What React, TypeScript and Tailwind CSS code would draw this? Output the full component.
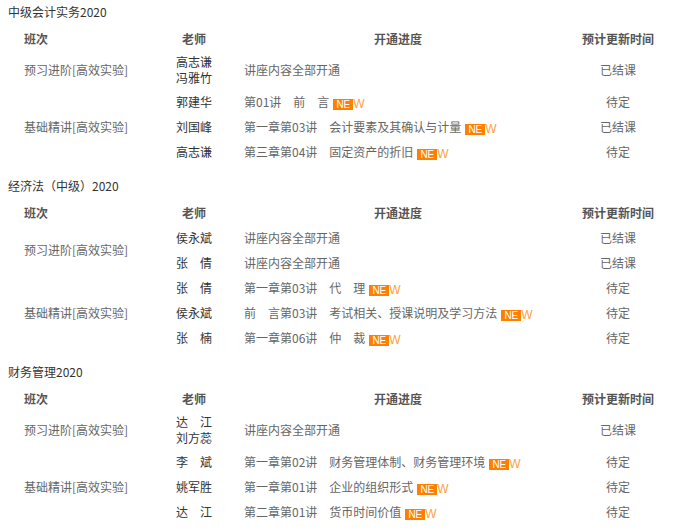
type Row = { teachers: string[]; progress: string; isNew?: boolean; status: string };
type Group = { name: string; rows: Row[] };
type Section = { title: string; groups: Group[] };

const sections: Section[] = [
  {
    title: "中级会计实务2020",
    groups: [
      {
        name: "预习进阶[高效实验]",
        rows: [{ teachers: ["高志谦", "冯雅竹"], progress: "讲座内容全部开通", status: "已结课" }],
      },
      {
        name: "基础精讲[高效实验]",
        rows: [
          { teachers: ["郭建华"], progress: "第01讲　前　言", isNew: true, status: "待定" },
          { teachers: ["刘国峰"], progress: "第一章第03讲　会计要素及其确认与计量", isNew: true, status: "已结课" },
          { teachers: ["高志谦"], progress: "第三章第04讲　固定资产的折旧", isNew: true, status: "待定" },
        ],
      },
    ],
  },
  {
    title: "经济法（中级）2020",
    groups: [
      {
        name: "预习进阶[高效实验]",
        rows: [
          { teachers: ["侯永斌"], progress: "讲座内容全部开通", status: "已结课" },
          { teachers: ["张　倩"], progress: "讲座内容全部开通", status: "已结课" },
        ],
      },
      {
        name: "基础精讲[高效实验]",
        rows: [
          { teachers: ["张　倩"], progress: "第一章第03讲　代　理", isNew: true, status: "待定" },
          { teachers: ["侯永斌"], progress: "前　言第03讲　考试相关、授课说明及学习方法", isNew: true, status: "待定" },
          { teachers: ["张　楠"], progress: "第一章第06讲　仲　裁", isNew: true, status: "待定" },
        ],
      },
    ],
  },
  {
    title: "财务管理2020",
    groups: [
      {
        name: "预习进阶[高效实验]",
        rows: [{ teachers: ["达　江", "刘方蕊"], progress: "讲座内容全部开通", status: "已结课" }],
      },
      {
        name: "基础精讲[高效实验]",
        rows: [
          { teachers: ["李　斌"], progress: "第一章第02讲　财务管理体制、财务管理环境", isNew: true, status: "待定" },
          { teachers: ["姚军胜"], progress: "第一章第01讲　企业的组织形式", isNew: true, status: "待定" },
          { teachers: ["达　江"], progress: "第二章第01讲　货币时间价值", isNew: true, status: "待定" },
        ],
      },
    ],
  },
];

function NewBadge() {
  return (
    <span className="ml-1 inline-flex items-center align-[-1px]">
      <span className="inline-block h-[11px] w-[20px] bg-[#ff7f00] text-center font-['Liberation_Sans',sans-serif] text-[10px] leading-[11px] text-white">
        NE
      </span>
      <span className="font-['Liberation_Sans',sans-serif] text-[12px] leading-[11px] text-[#ffa040]">W</span>
    </span>
  );
}

function SectionTable({ section, first }: { section: Section; first: boolean }) {
  return (
    <div className={first ? "" : "mt-[10px]"}>
      <div className="mb-[2px] h-6 px-2 text-[12px] leading-6 text-[#333]">{section.title}</div>
      <table className="ml-2 w-[660px] table-fixed border-collapse text-[12px] leading-4">
        <colgroup>
          <col className="w-[152px]" />
          <col className="w-[68px]" />
          <col className="w-[340px]" />
          <col className="w-[100px]" />
        </colgroup>
        <thead>
          <tr className="h-[25px] font-bold text-[#555]">
            <th className="pl-4 text-left font-bold">班次</th>
            <th className="text-center font-bold">老师</th>
            <th className="text-center font-bold">开通进度</th>
            <th className="text-center font-bold">预计更新时间</th>
          </tr>
        </thead>
        <tbody>
          {section.groups.map((g) =>
            g.rows.map((r, i) => (
              <tr key={g.name + i} className="h-[25px]">
                {i === 0 && (
                  <td rowSpan={g.rows.length} className="py-[3px] pl-4 align-middle text-[#666]">
                    {g.name}
                  </td>
                )}
                <td className="py-[3px] text-center text-[#333]">
                  {r.teachers.map((t) => (
                    <div key={t}>{t}</div>
                  ))}
                </td>
                <td className="whitespace-nowrap py-[3px] pl-4 text-[#666]">
                  {r.progress}
                  {r.isNew && <NewBadge />}
                </td>
                <td className="py-[3px] text-center text-[#666]">{r.status}</td>
              </tr>
            ))
          )}
        </tbody>
      </table>
    </div>
  );
}

export default function App() {
  return (
    <div className="h-[532px] w-[674px] overflow-hidden bg-white font-['Noto_Sans_CJK_SC','Noto_Sans',sans-serif]">
      {sections.map((s, i) => (
        <SectionTable key={s.title} section={s} first={i === 0} />
      ))}
    </div>
  );
}
